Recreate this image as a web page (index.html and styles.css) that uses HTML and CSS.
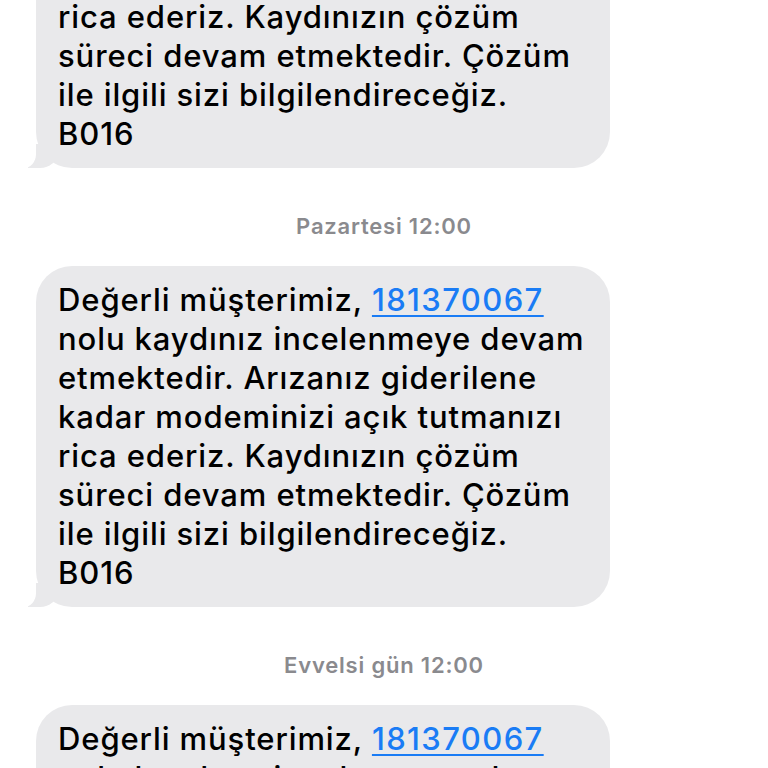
FILE: index.html
```html
<!DOCTYPE html>
<html lang="tr">
<head>
  <meta charset="UTF-8">
  <title>Mesajlar</title>
  <link rel="stylesheet" href="styles.css">
</head>
<body>
  <div class="thread">
    <div class="bubble">
      Değerli müşterimiz, <a href="#">181370067</a><br>
      nolu kaydınız incelenmeye devam<br>
      etmektedir. Arızanız giderilene<br>
      kadar modeminizi açık tutmanızı<br>
      rica ederiz. Kaydınızın çözüm<br>
      süreci devam etmektedir. Çözüm<br>
      ile ilgili sizi bilgilendireceğiz.<br>
      B016
    </div>

    <div class="stamp">Pazartesi 12:00</div>

    <div class="bubble">
      Değerli müşterimiz, <a href="#">181370067</a><br>
      nolu kaydınız incelenmeye devam<br>
      etmektedir. Arızanız giderilene<br>
      kadar modeminizi açık tutmanızı<br>
      rica ederiz. Kaydınızın çözüm<br>
      süreci devam etmektedir. Çözüm<br>
      ile ilgili sizi bilgilendireceğiz.<br>
      B016
    </div>

    <div class="stamp">Evvelsi gün 12:00</div>

    <div class="bubble">
      Değerli müşterimiz, <a href="#">181370067</a><br>
      nolu kaydınız incelenmeye devam<br>
      etmektedir. Arızanız giderilene<br>
      kadar modeminizi açık tutmanızı<br>
      rica ederiz. Kaydınızın çözüm<br>
      süreci devam etmektedir. Çözüm<br>
      ile ilgili sizi bilgilendireceğiz.<br>
      B016
    </div>
  </div>
</body>
</html>
```

FILE: styles.css
```css
body {
  margin: 0;
  padding: 0;
  background-color: #ffffff;
  font-family: 'Inter', 'Liberation Sans', sans-serif;
  overflow: hidden;
}

.thread {
  display: flex;
  flex-direction: column;
  margin-top: -173px;
}

.bubble {
  position: relative;
  width: 574px;
  margin-left: 36px;
  box-sizing: border-box;
  background-color: #e9e9eb;
  border-radius: 36px;
  padding: 14px 0 15px 22px;
  font-size: 31px;
  font-weight: 500;
  letter-spacing: 0.9px;
  line-height: 39px;
  color: #000000;
  white-space: nowrap;
}

.bubble a {
  color: #1a7cf5;
  letter-spacing: 1.4px;
  text-decoration: underline;
  text-underline-offset: 4px;
  text-decoration-thickness: 2px;
}

/* little tail at the bottom-left corner */
.bubble::before {
  content: "";
  position: absolute;
  left: -8px;
  bottom: 0;
  width: 30px;
  height: 24px;
  background-color: #e9e9eb;
  border-bottom-right-radius: 18px 16px;
}

.bubble::after {
  content: "";
  position: absolute;
  left: -22px;
  bottom: 0;
  width: 22px;
  height: 26px;
  background-color: #ffffff;
  border-bottom-right-radius: 12px 14px;
}

.stamp {
  text-align: center;
  padding: 44px 0 26px;
  font-size: 22px;
  line-height: 28px;
  font-weight: 600;
  letter-spacing: 0.8px;
  color: #8a8a8e;
}
```
